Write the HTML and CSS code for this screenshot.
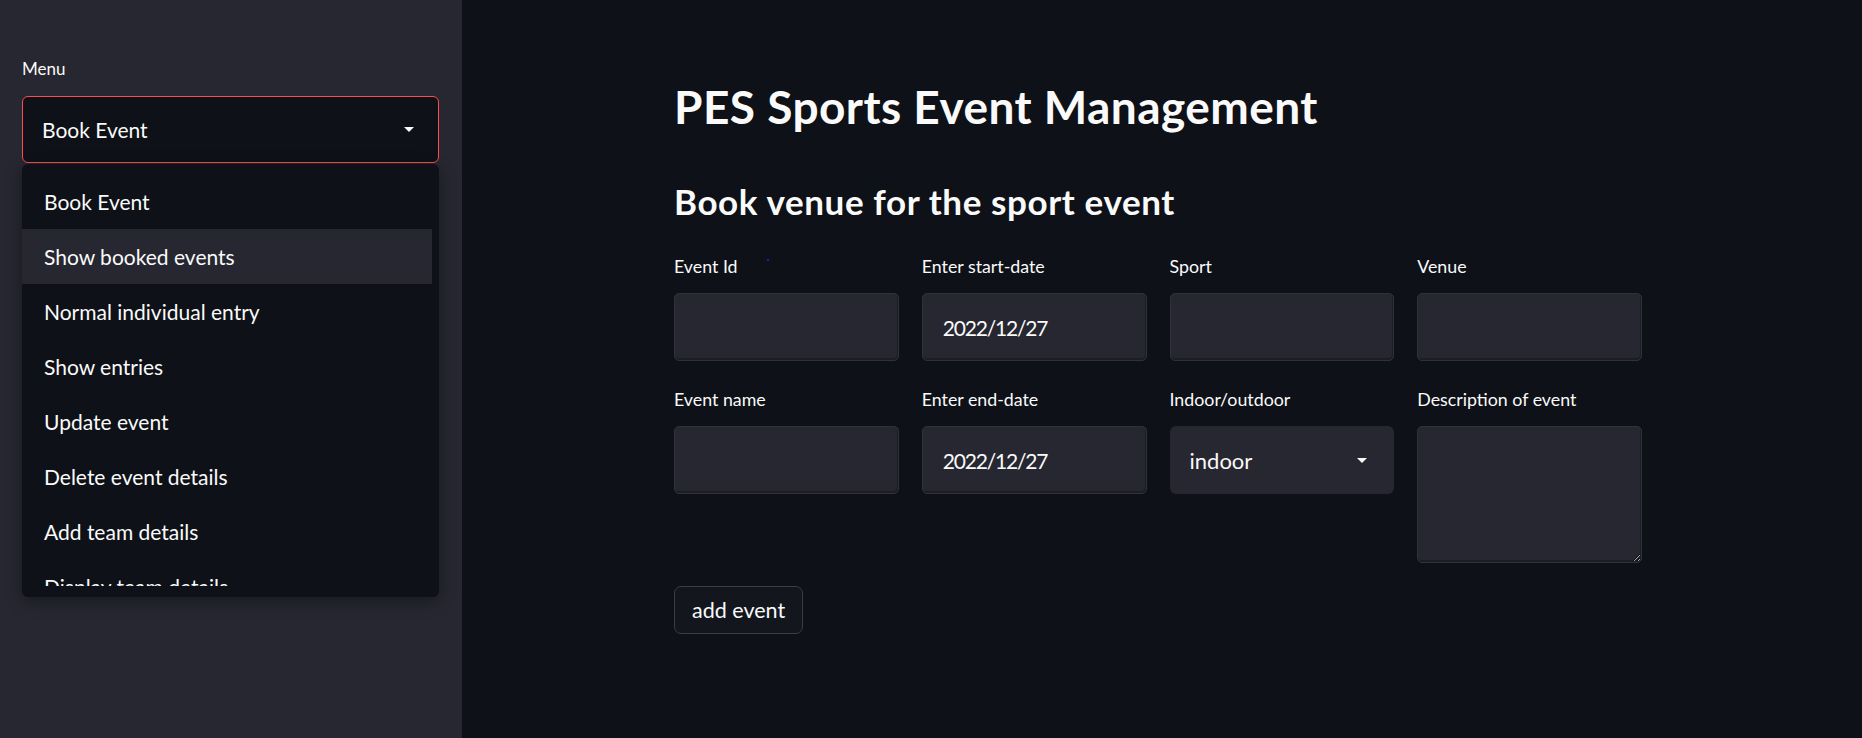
FILE: index.html
```html
<!DOCTYPE html>
<html lang="en">
<head>
<meta charset="utf-8">
<title>PES Sports Event Management</title>
<link rel="stylesheet" href="styles.css">
</head>
<body>
<div class="app">
  <aside class="sidebar">
    <div class="menu-label">Menu</div>
    <div class="select-wrap">
      <div class="select select-open">
        <span class="select-value">Book Event</span>
        <svg class="caret" viewBox="0 0 10 5" width="10" height="5"><polygon points="0,0 10,0 5,5" fill="#fafafa"/></svg>
      </div>
      <div class="dropdown">
        <ul class="options">
          <li class="option">Book Event</li>
          <li class="option option-hover">Show booked events</li>
          <li class="option">Normal individual entry</li>
          <li class="option">Show entries</li>
          <li class="option">Update event</li>
          <li class="option">Delete event details</li>
          <li class="option">Add team details</li>
          <li class="option">Display team details</li>
        </ul>
      </div>
    </div>
  </aside>
  <main class="main">
    <div class="content">
      <h1 class="title">PES Sports Event Management</h1>
      <h2 class="subtitle">Book venue for the sport event</h2>
      <div class="columns">
        <div class="col">
          <div class="field">
            <label class="label">Event Id<span class="dot"></span></label>
            <input class="input" type="text" value="">
          </div>
          <div class="field">
            <label class="label">Event name</label>
            <input class="input" type="text" value="">
          </div>
        </div>
        <div class="col">
          <div class="field">
            <label class="label">Enter start-date</label>
            <input class="input input-date" type="text" value="2022/12/27">
          </div>
          <div class="field">
            <label class="label">Enter end-date</label>
            <input class="input input-date" type="text" value="2022/12/27">
          </div>
        </div>
        <div class="col">
          <div class="field">
            <label class="label">Sport</label>
            <input class="input" type="text" value="">
          </div>
          <div class="field">
            <label class="label">Indoor/outdoor</label>
            <div class="select-plain">
              <span class="select-value">indoor</span>
              <svg class="caret" viewBox="0 0 10 5" width="10" height="5"><polygon points="0,0 10,0 5,5" fill="#fafafa"/></svg>
            </div>
          </div>
        </div>
        <div class="col">
          <div class="field">
            <label class="label">Venue</label>
            <input class="input" type="text" value="">
          </div>
          <div class="field">
            <label class="label">Description of event</label>
            <textarea class="textarea"></textarea>
          </div>
        </div>
      </div>
      <button class="btn" type="button">add event</button>
    </div>
  </main>
</div>
</body>
</html>
```
FILE: styles.css
```css
html, body {
  margin: 0;
  padding: 0;
  background: #0e1117;
  color: #fafafa;
  font-family: Lato, "Noto Sans", sans-serif;
}

.app {
  display: flex;
  width: 1862px;
  height: 738px;
  overflow: hidden;
}

/* Sidebar */
.sidebar {
  width: 462px;
  flex: none;
  background: #262730;
  box-sizing: border-box;
  padding: 59px 23px 0 22px;
}

.menu-label {
  font-size: 17px;
  line-height: 20px;
  margin-bottom: 17px;
}

.select-wrap {
  position: relative;
}

.select {
  height: 67px;
  box-sizing: border-box;
  display: flex;
  align-items: center;
  justify-content: space-between;
  padding: 0 24px 0 19px;
  background: #0e1117;
  border: 1px solid #ff4b4b;
  border-radius: 6px;
  font-size: 21px;
}

.caret {
  display: block;
  flex: none;
}

.dropdown {
  position: absolute;
  top: 68px;
  left: 0;
  right: 0;
  background: #0e1117;
  border-radius: 6px;
  padding: 10px 7px 11px 0;
  box-shadow: 0 4px 16px rgba(0, 0, 0, 0.35);
}

.options {
  list-style: none;
  margin: 0;
  padding: 0;
  height: 412px;
  overflow: hidden;
}

.option {
  height: 55px;
  display: flex;
  align-items: center;
  padding-left: 22px;
  font-size: 21px;
}

.option-hover {
  background: #262730;
}

/* Main */
.main {
  flex: 1;
  padding-left: 212px;
}

.content {
  width: 968px;
  padding-top: 80px;
}

.title {
  margin: 0;
  font-size: 46px;
  line-height: 53px;
  font-weight: 700;
  letter-spacing: 0.45px;
}

.subtitle {
  margin: 48px 0 0;
  font-size: 35px;
  line-height: 40px;
  font-weight: 700;
  letter-spacing: 0.6px;
}

.columns {
  display: flex;
  gap: 23px;
  margin-top: 35px;
}

.col {
  flex: 1;
  display: flex;
  flex-direction: column;
  gap: 28px;
  min-width: 0;
}

.field {
  display: flex;
  flex-direction: column;
  position: relative;
}

.label {
  font-size: 17.8px;
  line-height: 21px;
  margin-bottom: 16px;
  position: relative;
}

.dot {
  position: absolute;
  left: 93px;
  top: 3px;
  width: 2px;
  height: 2px;
  background: #1a1acc;
}

.input {
  height: 68px;
  box-sizing: border-box;
  width: 100%;
  margin: 0;
  background: #262730;
  border: 1px solid #30323b;
  border-radius: 5px;
  box-shadow: inset -1px -2px 0 #1c1d25;
  padding: 0 20px;
  color: #fafafa;
  font-family: inherit;
  font-size: 22px;
  outline: none;
}

.input-date {
  font-size: 21px;
  letter-spacing: -1.2px;
}

.select-plain {
  height: 68px;
  box-sizing: border-box;
  display: flex;
  align-items: center;
  justify-content: space-between;
  padding: 0 27px 0 20px;
  background: #262730;
  border-radius: 6px;
  font-size: 22px;
}

.textarea {
  height: 137px;
  box-sizing: border-box;
  width: 100%;
  margin: 0;
  background: #262730;
  border: 1px solid #30323b;
  border-radius: 5px;
  box-shadow: inset -1px -2px 0 #1c1d25;
  padding: 16px 20px;
  color: #fafafa;
  font-family: inherit;
  font-size: 22px;
  resize: vertical;
  outline: none;
  color-scheme: dark;
}

.btn {
  margin-top: 23px;
  height: 48px;
  padding: 0 17px;
  background: #13161d;
  border: 1px solid #3a3d46;
  border-radius: 7px;
  color: #fafafa;
  font-family: inherit;
  font-size: 21.5px;
  cursor: pointer;
}
```
